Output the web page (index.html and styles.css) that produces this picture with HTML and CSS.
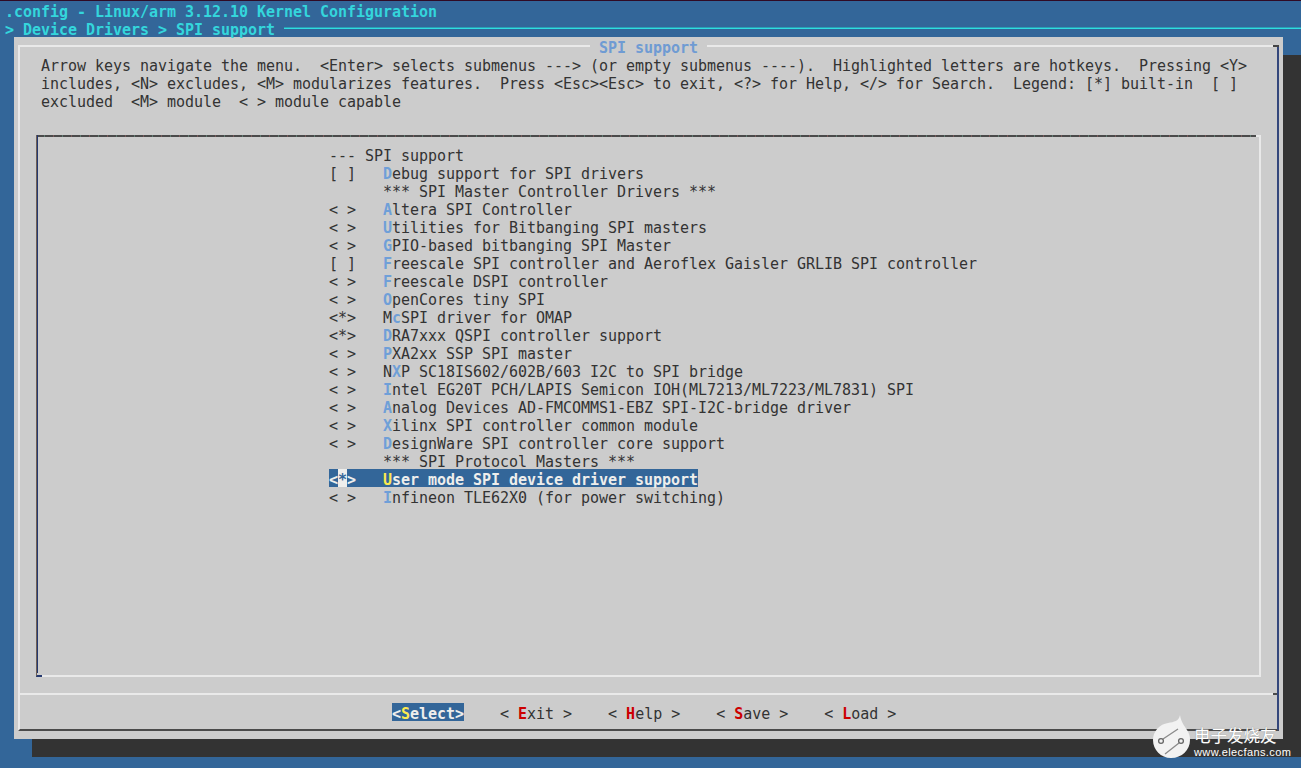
FILE: index.html
```html
<!DOCTYPE html>
<html lang="en">
<head>
<meta charset="utf-8">
<title>SPI support</title>
<link rel="stylesheet" href="styles.css">
</head>
<body>
<div class="screen">
  <div class="row back">.config - Linux/arm 3.12.10 Kernel Configuration</div>
  <div class="row back crumb"><span>&gt; Device Drivers &gt; SPI support </span><i class="rule"></i></div>
  <div class="dialog">
    <div class="frame">
      <div class="title"> SPI support </div>
      <div class="help">
        <div class="row">Arrow keys navigate the menu.  &lt;Enter&gt; selects submenus ---&gt; (or empty submenus ----).  Highlighted letters are hotkeys.  Pressing &lt;Y&gt;</div>
        <div class="row">includes, &lt;N&gt; excludes, &lt;M&gt; modularizes features.  Press &lt;Esc&gt;&lt;Esc&gt; to exit, &lt;?&gt; for Help, &lt;/&gt; for Search.  Legend: [*] built-in  [ ]</div>
        <div class="row">excluded  &lt;M&gt; module  &lt; &gt; module capable</div>
      </div>
      <div class="box">
        <div class="row">--- SPI support</div>
        <div class="row">[ ]   <b class="hot">D</b>ebug support for SPI drivers</div>
        <div class="row">      *** SPI Master Controller Drivers ***</div>
        <div class="row">&lt; &gt;   <b class="hot">A</b>ltera SPI Controller</div>
        <div class="row">&lt; &gt;   <b class="hot">U</b>tilities for Bitbanging SPI masters</div>
        <div class="row">&lt; &gt;   <b class="hot">G</b>PIO-based bitbanging SPI Master</div>
        <div class="row">[ ]   <b class="hot">F</b>reescale SPI controller and Aeroflex Gaisler GRLIB SPI controller</div>
        <div class="row">&lt; &gt;   <b class="hot">F</b>reescale DSPI controller</div>
        <div class="row">&lt; &gt;   <b class="hot">O</b>penCores tiny SPI</div>
        <div class="row">&lt;*&gt;   M<b class="hot">c</b>SPI driver for OMAP</div>
        <div class="row">&lt;*&gt;   <b class="hot">D</b>RA7xxx QSPI controller support</div>
        <div class="row">&lt; &gt;   <b class="hot">P</b>XA2xx SSP SPI master</div>
        <div class="row">&lt; &gt;   N<b class="hot">X</b>P SC18IS602/602B/603 I2C to SPI bridge</div>
        <div class="row">&lt; &gt;   <b class="hot">I</b>ntel EG20T PCH/LAPIS Semicon IOH(ML7213/ML7223/ML7831) SPI</div>
        <div class="row">&lt; &gt;   <b class="hot">A</b>nalog Devices AD-FMCOMMS1-EBZ SPI-I2C-bridge driver</div>
        <div class="row">&lt; &gt;   <b class="hot">X</b>ilinx SPI controller common module</div>
        <div class="row">&lt; &gt;   <b class="hot">D</b>esignWare SPI controller core support</div>
        <div class="row">      *** SPI Protocol Masters ***</div>
        <div class="row"><span class="sel">&lt;<span class="cursor">*</span>&gt;   <span class="selhot">U</span>ser mode SPI device driver support</span></div>
        <div class="row">&lt; &gt;   <b class="hot">I</b>nfineon TLE62X0 (for power switching)</div>
      </div>
      <div class="footer">
        <div class="row sel">&lt;<span class="selhot">S</span>elect&gt;</div>
        <div class="row">&lt; <b class="key">E</b>xit &gt;</div>
        <div class="row">&lt; <b class="key">H</b>elp &gt;</div>
        <div class="row">&lt; <b class="key">S</b>ave &gt;</div>
        <div class="row">&lt; <b class="key">L</b>oad &gt;</div>
      </div>
    </div>
  </div>
  <div class="mark">
    <svg class="mark-logo" viewBox="1150 712 44 48" width="44" height="48" aria-hidden="true">
      <path class="blob" d="M1180 715C1181 722 1184 725 1187 730C1189 733 1190 736 1190 740C1190 750 1182 758 1171 758C1161 758 1153 750 1153 740C1153 731 1160 724 1168 723C1174 722 1179 721 1180 715Z"/>
      <path class="wire" d="M1163 739L1178 729M1179 743L1165 754"/>
      <circle class="ring" cx="1161" cy="741" r="2.4"/>
      <circle class="ring" cx="1181" cy="741" r="2.4"/>
    </svg>
    <div class="mark-text">
      <div class="mark-cn">电子发烧友</div>
      <div class="mark-en">www.elecfans.com</div>
    </div>
  </div>
</div>
</body>
</html>
```
FILE: styles.css
```css
* { box-sizing: border-box; }
html, body { margin: 0; padding: 0; }
body {
  width: 1301px;
  height: 768px;
  overflow: hidden;
  background: #336699;
  font-family: "DejaVu Sans Mono", "Liberation Mono", monospace;
  font-size: 15px;
  letter-spacing: -0.03px;
  color: #333333;
}
.screen {
  position: relative;
  height: 768px;
  border-top: 1px solid #300a24;
}
.row {
  height: 18px;
  line-height: 22px;
  white-space: pre;
}
.back {
  padding-left: 5px;
  color: #34d6dc;
  font-weight: bold;
}
.crumb {
  display: flex;
  align-items: flex-start;
}
.crumb > span {
  height: 18px;
}
.rule {
  flex: 1;
  height: 2px;
  margin-top: 8px;
  background: linear-gradient(#2a9fb5 0 1px, #2fdde0 1px 2px);
}
.dialog {
  width: 1269px;
  height: 702px;
  margin-left: 14px;
  padding: 8px 4px 0;
  background: #cccccc;
  box-shadow: 18px 18px 0 #333333;
}
.frame {
  position: relative;
  height: 686px;
  display: flex;
  flex-direction: column;
  border-top: 2px solid #e9e9e9;
  border-left: 2px solid #e9e9e9;
  border-right: 2px solid #34477c;
  border-bottom: 2px solid #4a4a4a;
}
/* corner of the line-drawn frame, top right */
.frame::after {
  content: "";
  position: absolute;
  top: -2px;
  right: -2px;
  width: 6px;
  height: 2px;
  background: #444444;
}
.title {
  position: absolute;
  top: -10px;
  left: 570px;
  height: 18px;
  line-height: 22px;
  white-space: pre;
  background: #cccccc;
  color: #6f9bd3;
  font-weight: bold;
}
.help {
  flex: none;
  padding: 8px 0 0 21px;
}
.box {
  position: relative;
  flex: none;
  height: 542px;
  margin: 26px 16px 0;
  padding: 8px 0 0 291px;
  border-right: 2px solid #e9e9e9;
  border-bottom: 2px solid #e9e9e9;
  border-top: 2px solid #e9e9e9;
  border-left: 2px solid transparent;
}
/* dashed dark top and left edges of the inner box */
.box::before {
  content: "";
  position: absolute;
  top: -2px;
  left: -2px;
  right: 3px;
  height: 2px;
  background: repeating-linear-gradient(90deg, #4a4a4a 0 8px, #5e7a70 8px 9px, #4a4a4a 9px 17px, #7a5a5a 17px 18px);
}
.box::after {
  content: "";
  position: absolute;
  top: -2px;
  bottom: -2px;
  left: -2px;
  width: 5px;
  border-left: 1px solid #6e5f55;
  border-bottom: 2px solid #24386f;
  background: linear-gradient(90deg, #24386f 0 1px, transparent 1px);
  background-size: 100% calc(100% - 2px);
  background-repeat: no-repeat;
}
.hot {
  color: #6f9fd8;
}
.sel {
  display: inline-block;
  height: 18px;
  background: #336699;
  color: #eeeeec;
  font-weight: bold;
}
.cursor {
  display: inline-block;
  height: 18px;
  vertical-align: top;
  background: #eeeeec;
  color: #336699;
}
.selhot {
  color: #fce94f;
}
.footer {
  position: relative;
  flex: none;
  display: flex;
  gap: 36px;
  height: 36px;
  margin-top: 16px;
  padding: 8px 0 0 372px;
  border-top: 2px solid #e9e9e9;
}
/* tee joining the divider to the right edge */
.footer::after {
  content: "";
  position: absolute;
  top: -2px;
  right: 0;
  width: 4px;
  height: 2px;
  background: #4a4a4a;
}
.key {
  color: #cc0000;
}
.mark {
  position: absolute;
  left: 1150px;
  top: 711px;
  display: flex;
  width: 151px;
  color: #ffffff;
}
.mark-logo {
  flex: none;
}
.blob {
  fill: #f2f2f2;
}
.wire {
  fill: none;
  stroke: #8a8a8a;
  stroke-width: 1.3;
}
.ring {
  fill: #f2f2f2;
  stroke: #666666;
  stroke-width: 1.3;
}
.mark-text {
  flex: none;
  width: 107px;
  padding-top: 12px;
  letter-spacing: 0;
}
.mark-cn {
  height: 22px;
  line-height: 22px;
  font-family: "Noto Sans CJK SC", sans-serif;
  font-size: 16.5px;
  white-space: nowrap;
  text-shadow: 0 0 1px #777777;
}
.mark-en {
  height: 12px;
  line-height: 12px;
  font-family: "Liberation Sans", sans-serif;
  font-size: 11px;
  letter-spacing: 0.38px;
  white-space: nowrap;
}
```
